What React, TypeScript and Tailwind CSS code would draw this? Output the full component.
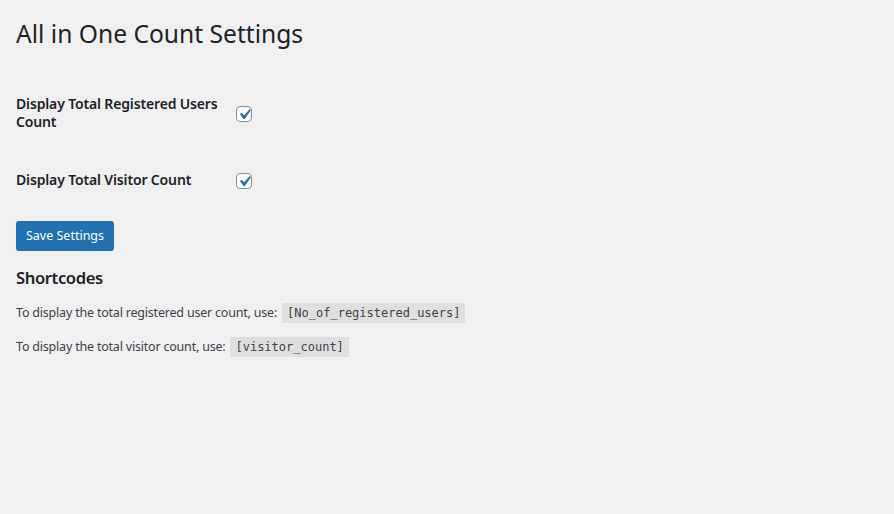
import React from "react";

function Check() {
  return (
    <span className="flex h-4 w-4 items-center justify-center overflow-visible rounded-[4px] border border-[#8c8f94] bg-white shadow-[inset_0_1px_2px_rgba(0,0,0,0.1)]">
      <svg viewBox="0 0 20 20" className="-m-[3px] h-[21px] w-[21px] shrink-0" fill="#2271b1">
        <path d="M14.83 4.89l1.34.94-5.81 8.38H9.02L5.78 9.67l1.34-1.25 2.57 2.4z" />
      </svg>
    </span>
  );
}

export default function App() {
  return (
    <div className="min-h-[514px] w-full bg-[#f0f0f1] pl-[16px] pt-[19px] text-[#1d2327] [font-family:'Noto_Sans',sans-serif]">
      <h1 className="text-[24.6px] font-normal leading-[30px]">All in One Count Settings</h1>
      <div className="mt-[22px]">
        <div className="flex h-[76px]">
          <div className="w-[220px] pr-[2px] pt-[24px] text-[14px] font-semibold leading-[17.5px] tracking-[-0.15px]">
            Display Total Registered Users Count
          </div>
          <div className="pt-[35px]">
            <Check />
          </div>
        </div>
        <div className="flex h-[58px]">
          <div className="w-[220px] pr-[2px] pt-[24px] text-[14px] font-semibold leading-[17.5px] tracking-[-0.15px]">
            Display Total Visitor Count
          </div>
          <div className="pt-[26px]">
            <Check />
          </div>
        </div>
      </div>
      <button className="mt-[16px] h-[30px] w-[98px] rounded-[3px] bg-[#2271b1] text-[12.5px] text-white">
        Save Settings
      </button>
      <h2 className="mt-[16px] text-[16.6px] font-semibold leading-[22px] tracking-[-0.4px]">Shortcodes</h2>
      <div className="mt-[14px] flex h-[20px] items-center text-[12.5px] tracking-[-0.2px] text-[#3c434a]">
        <span>To display the total registered user count, use:</span>
        <code className="ml-[5px] bg-[rgba(0,0,0,0.07)] px-[5px] pb-[2px] pt-[3px] text-[12px] leading-[15px] tracking-normal [font-family:'DejaVu_Sans_Mono',monospace]">
          [No_of_registered_users]
        </code>
      </div>
      <div className="mt-[14px] flex h-[20px] items-center text-[12.5px] tracking-[-0.2px] text-[#3c434a]">
        <span>To display the total visitor count, use:</span>
        <code className="ml-[5px] bg-[rgba(0,0,0,0.07)] px-[5px] pb-[2px] pt-[3px] text-[12px] leading-[15px] tracking-normal [font-family:'DejaVu_Sans_Mono',monospace]">
          [visitor_count]
        </code>
      </div>
    </div>
  );
}
